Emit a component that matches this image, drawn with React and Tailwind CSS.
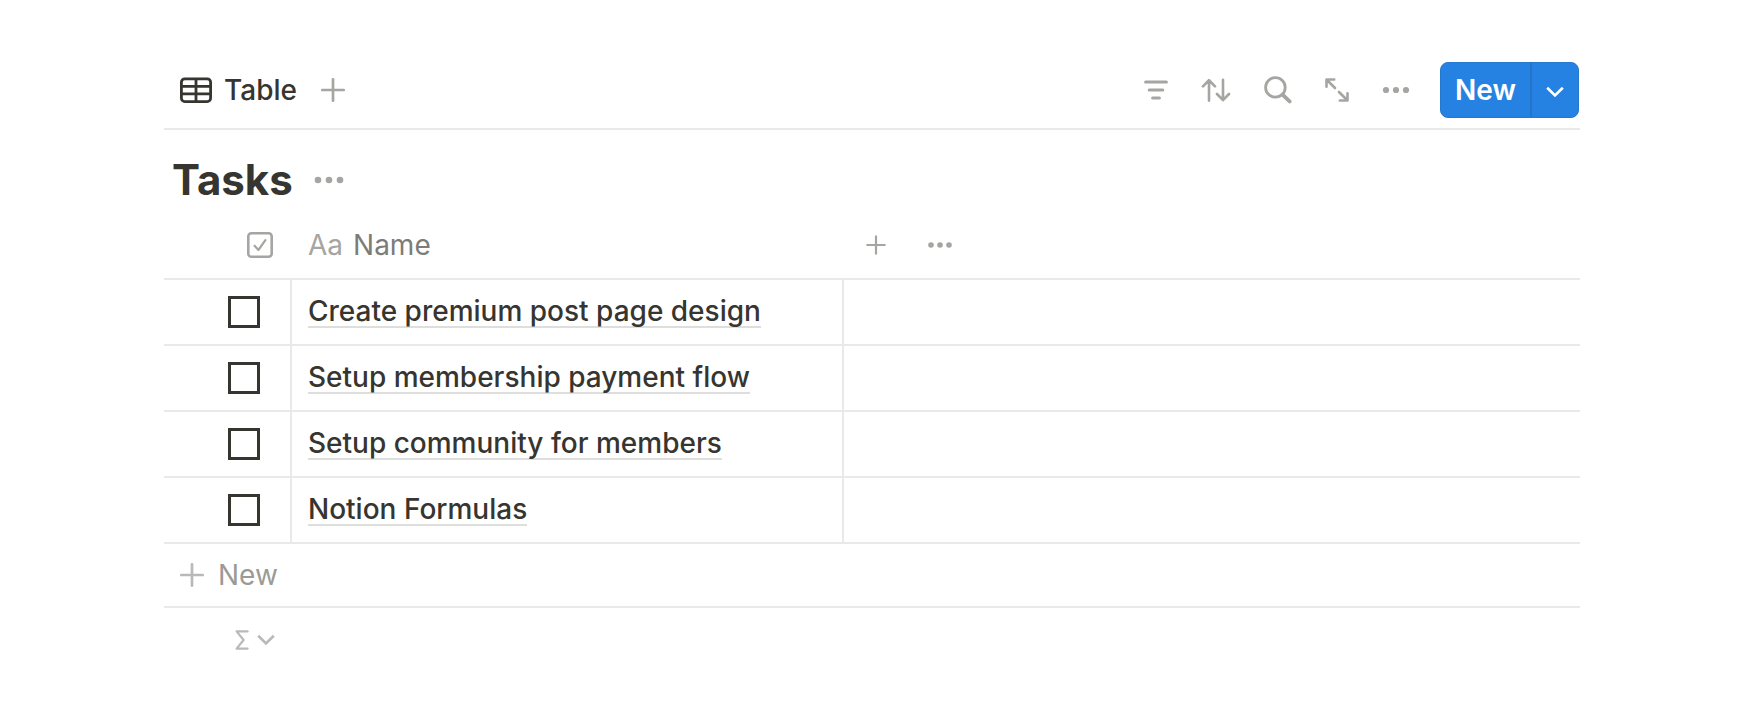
import React, { useState } from "react";

const TASKS = [
  "Create premium post page design",
  "Setup membership payment flow",
  "Setup community for members",
  "Notion Formulas",
];

function Icon({ className, width, height, strokeWidth = 2, children }) {
  return (
    <svg
      className={className}
      width={width}
      height={height}
      viewBox={`0 0 ${width} ${height}`}
      fill="none"
      stroke="currentColor"
      strokeWidth={strokeWidth}
      strokeLinecap="round"
      strokeLinejoin="round"
      aria-hidden="true"
    >
      {children}
    </svg>
  );
}

function PlusIcon({ size = 24, className, strokeWidth = 2.7 }) {
  const mid = size / 2;
  return (
    <Icon width={size} height={size} className={className} strokeWidth={strokeWidth}>
      <path d={`M1.3 ${mid}H${size - 1.3}M${mid} 1.3V${size - 1.3}`} />
    </Icon>
  );
}

function DotsIcon({ width, gap, r }) {
  const mid = width / 2;
  return (
    <Icon width={width} height={8} strokeWidth={0}>
      <g fill="currentColor">
        <circle cx={mid - gap} cy="4" r={r} />
        <circle cx={mid} cy="4" r={r} />
        <circle cx={mid + gap} cy="4" r={r} />
      </g>
    </Icon>
  );
}

function ChevronIcon({ className }) {
  return (
    <Icon width={18} height={12} strokeWidth={2.6} className={className}>
      <path d="M1.2 1.8L9 9.4L16.8 1.8" strokeLinecap="butt" strokeLinejoin="miter" />
    </Icon>
  );
}

function Toolbar() {
  return (
    <header className="flex items-center justify-between border-b-2 border-[#e9e9e7] pb-2.5">
      <div className="flex items-center pl-4">
        <button type="button" className="flex items-center gap-3 font-medium">
          <Icon width={32} height={26} strokeWidth={2.8}>
            <rect x="1.4" y="1.8" width="29.2" height="22.8" rx="3.4" />
            <path d="M16 2V24M2 9.4H30M2 16.8H30" strokeLinecap="butt" />
          </Icon>
          Table
        </button>
        <button type="button" aria-label="Add view" className="ml-6 text-[#a5a5a2]">
          <PlusIcon />
        </button>
      </div>
      <div className="flex items-center text-[#a5a5a2]">
        <div className="flex items-center gap-[33px] pr-[30px]">
          <button type="button" aria-label="Filter">
            <Icon width={24} height={20} strokeWidth={3}>
              <path d="M1.6 2H22.4M5.2 10H18.8M8.6 18H15.4" />
            </Icon>
          </button>
          <button type="button" aria-label="Sort">
            <Icon width={30} height={24} strokeWidth={2.6}>
              <path d="M8 22.6V2.6M2 8.4L8 2.2L14 8.4M22 1.8V21.8M16 16L22 22.2L28 16" />
            </Icon>
          </button>
          <button type="button" aria-label="Search">
            <Icon width={28} height={28} strokeWidth={2.8}>
              <circle cx="11.4" cy="11.4" r="9.8" />
              <path d="M18.6 18.6L25.6 25.4" strokeWidth="3.8" />
            </Icon>
          </button>
          <button type="button" aria-label="Open as full page">
            <Icon width={24} height={24} strokeWidth={2.6}>
              <path d="M1.5 8.8V1.5H9.2M2 2L10 10M14 14L22 22M22.5 15.2V22.5H14.8" />
            </Icon>
          </button>
          <button type="button" aria-label="View options">
            <DotsIcon width={28} gap={10} r={3.1} />
          </button>
        </div>
        <div className="mr-px flex h-14 overflow-hidden rounded-lg border border-[#2478cd] bg-[#2582e2] text-white">
          <button type="button" className="border-r-2 border-[#2474c8] px-3.5 font-semibold">
            New
          </button>
          <button type="button" aria-label="New item options" className="px-3.5">
            <ChevronIcon className="mt-1" />
          </button>
        </div>
      </div>
    </header>
  );
}

function TaskRow({ name }) {
  const [done, setDone] = useState(false);
  return (
    <tr className="h-[66px]">
      <td className="border-r-2 border-b-2 border-[#e9e9e7] pr-[30px]">
        <input
          type="checkbox"
          aria-label={name}
          checked={done}
          onChange={(e) => setDone(e.target.checked)}
          className="ml-auto block size-8 appearance-none border-3 border-[#37352f] checked:bg-[#2582e2]"
        />
      </td>
      <td className="border-r-2 border-b-2 border-[#e9e9e7] pl-4">
        <a
          href="#task"
          className="block w-fit border-b-2 border-[#dededc] leading-[30px] font-medium whitespace-nowrap"
        >
          {name}
        </a>
      </td>
      <td className="border-b-2 border-[#e9e9e7]" />
    </tr>
  );
}

export default function App() {
  return (
    <main className="min-h-screen bg-white pt-[62px] pr-45 pb-12 pl-41 font-[Inter,'Liberation_Sans',sans-serif] text-[28px] leading-8 text-[#37352f]">
      <Toolbar />
      <div className="mt-[18px] flex h-16 items-center gap-5 pl-2">
        <h1 className="text-[42px] leading-[48px] font-bold">Tasks</h1>
        <button type="button" aria-label="Database options" className="text-[#a5a5a2]">
          <DotsIcon width={32} gap={11} r={3.3} />
        </button>
      </div>
      <table className="w-full table-fixed border-separate border-spacing-0 text-left">
        <colgroup>
          <col className="w-32" />
          <col className="w-[552px]" />
          <col />
        </colgroup>
        <thead>
          <tr className="h-[68px]">
            <th scope="col" aria-label="Done" className="border-b-2 border-[#e9e9e7] pr-[19px]">
              <Icon width={26} height={26} strokeWidth={2.6} className="ml-auto block text-[#a5a5a2]">
                <rect x="1.3" y="1.3" width="23.4" height="23.4" rx="3" />
                <path d="M7.6 13.8L11.4 18L18.4 8.2" strokeWidth="2.2" />
              </Icon>
            </th>
            <th scope="col" className="border-b-2 border-[#e9e9e7] pl-4 font-normal text-[#7d7c78]">
              <span className="flex items-center gap-2.5">
                <span aria-hidden="true" className="text-[#a5a5a2]">
                  Aa
                </span>
                Name
              </span>
            </th>
            <td className="border-b-2 border-[#e9e9e7] pl-[22px] text-[#a5a5a2]">
              <div className="flex items-center gap-10">
                <button type="button" aria-label="Add property">
                  <PlusIcon size={20} strokeWidth={2.2} />
                </button>
                <button type="button" aria-label="Property options">
                  <DotsIcon width={28} gap={9} r={2.8} />
                </button>
              </div>
            </td>
          </tr>
        </thead>
        <tbody>
          {TASKS.map((name) => (
            <TaskRow key={name} name={name} />
          ))}
        </tbody>
      </table>
      <button
        type="button"
        className="flex h-16 w-full items-center gap-3.5 border-b-2 border-[#e9e9e7] pl-4 text-[#9b9a97]"
      >
        <PlusIcon className="text-[#b9b9b7]" />
        New
      </button>
      <div className="flex h-16 w-32 items-center justify-end pr-[17px] text-[#b9b9b7]">
        <button type="button" aria-label="Calculate" className="flex items-center gap-2">
          <Icon width={14} height={20} strokeWidth={2.2}>
            <path d="M12.6 1.4H1.6L8.6 10L1.6 18.6H12.6" />
          </Icon>
          <ChevronIcon />
        </button>
      </div>
    </main>
  );
}
